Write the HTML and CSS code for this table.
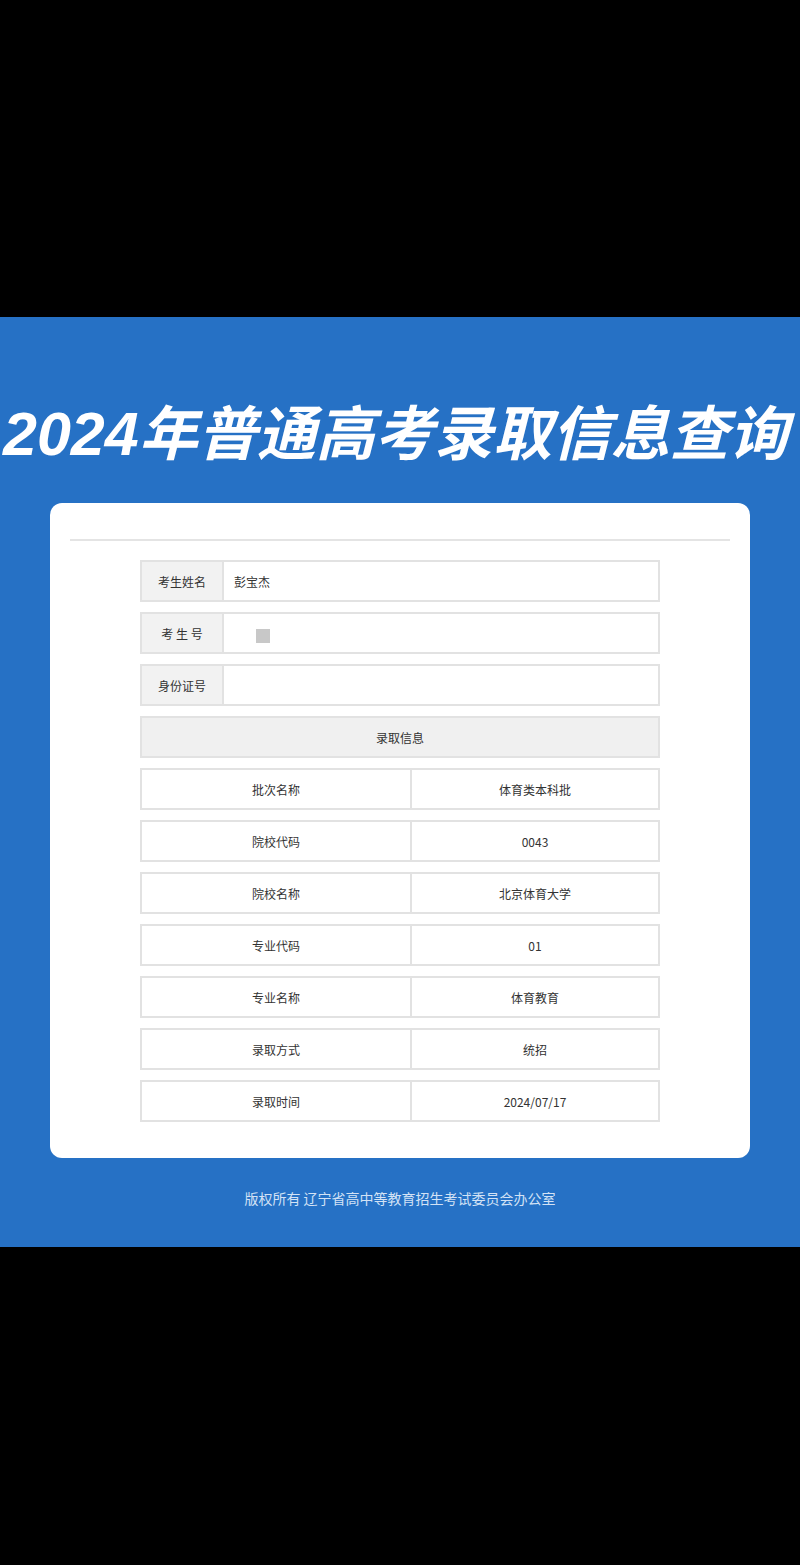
FILE: index.html
```html
<!DOCTYPE html>
<html lang="zh-CN">
<head>
<meta charset="utf-8">
<title>2024年普通高考录取信息查询</title>
<link rel="stylesheet" href="styles.css">
</head>
<body>
<div class="black-top"></div>
<main class="blue">
  <h1 class="title"><span class="digits">2024</span>年普通高考录取信息查询</h1>
  <section class="card">
    <div class="rule"></div>
    <div class="table">
      <div class="row">
        <div class="label">考生姓名</div>
        <div class="value">彭宝杰</div>
      </div>
      <div class="row">
        <div class="label">考 生 号</div>
        <div class="value"><span class="mask"></span></div>
      </div>
      <div class="row">
        <div class="label">身份证号</div>
        <div class="value"></div>
      </div>
      <div class="row head">录取信息</div>
      <div class="row pair"><div class="cell">批次名称</div><div class="cell right">体育类本科批</div></div>
      <div class="row pair"><div class="cell">院校代码</div><div class="cell right">0043</div></div>
      <div class="row pair"><div class="cell">院校名称</div><div class="cell right">北京体育大学</div></div>
      <div class="row pair"><div class="cell">专业代码</div><div class="cell right">01</div></div>
      <div class="row pair"><div class="cell">专业名称</div><div class="cell right">体育教育</div></div>
      <div class="row pair"><div class="cell">录取方式</div><div class="cell right">统招</div></div>
      <div class="row pair"><div class="cell">录取时间</div><div class="cell right">2024/07/17</div></div>
    </div>
  </section>
  <footer class="footer">版权所有 辽宁省高中等教育招生考试委员会办公室</footer>
</main>
<div class="black-bottom"></div>
</body>
</html>
```

FILE: styles.css
```css
html, body {
  margin: 0;
  padding: 0;
  background: #000;
}
body {
  width: 800px;
  height: 1565px;
  overflow: hidden;
  font-family: "Noto Sans CJK SC", "Noto Sans", sans-serif;
  display: flex;
  flex-direction: column;
}
.black-top {
  height: 317px;
  background: #000;
  flex: none;
}
.blue {
  height: 930px;
  background: #2671c5;
  flex: none;
  display: flex;
  flex-direction: column;
  align-items: center;
  overflow: hidden;
}
.title {
  margin: 78px 0 0 0;
  width: 800px;
  height: 70px;
  line-height: 70px;
  font-family: "Noto Sans CJK SC", sans-serif;
  font-size: 59px;
  font-weight: bold;
  font-style: italic;
  color: #fff;
  white-space: nowrap;
  padding-left: 3px;
  box-sizing: border-box;
  letter-spacing: 0;
}
.digits {
  font-family: "Liberation Sans", sans-serif;
  font-size: 61px;
}
.card {
  margin-top: 38px;
  width: 700px;
  box-sizing: border-box;
  background: #fff;
  border-radius: 12px;
  padding: 36px 20px 36px;
}
.rule {
  height: 2px;
  background: #e4e4e4;
}
.table {
  margin: 19px 70px 0;
  display: flex;
  flex-direction: column;
  gap: 10px;
}
.row {
  height: 42px;
  box-sizing: border-box;
  border: 2px solid #e2e2e2;
  display: flex;
  font-size: 12px;
  color: #333;
}
.label {
  width: 80px;
  flex: none;
  background: #f2f2f2;
  border-right: 2px solid #e2e2e2;
  display: flex;
  align-items: center;
  justify-content: center;
}
.value {
  flex: 1;
  display: flex;
  align-items: center;
  padding-left: 10px;
}
.mask {
  width: 14px;
  height: 14px;
  background: #c8c8c8;
  margin: 6px 0 0 22px;
}
.head {
  background: #f0f0f0;
  align-items: center;
  justify-content: center;
}
.cell {
  width: 268px;
  flex: none;
  display: flex;
  align-items: center;
  justify-content: center;
}
.cell.right {
  flex: 1;
  border-left: 2px solid #e2e2e2;
}
.footer {
  margin-top: 30px;
  font-size: 14px;
  color: #d3e2f5;
  line-height: 20px;
}
.black-bottom {
  flex: 1;
  background: #000;
}
```
